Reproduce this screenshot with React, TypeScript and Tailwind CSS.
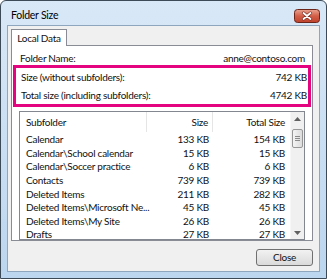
import React from 'react';

const rows = [
  { name: 'Calendar', size: '133 KB', total: '154 KB' },
  { name: 'Calendar\\School calendar', size: '15 KB', total: '15 KB' },
  { name: 'Calendar\\Soccer practice', size: '6 KB', total: '6 KB' },
  { name: 'Contacts', size: '739 KB', total: '739 KB' },
  { name: 'Deleted Items', size: '211 KB', total: '282 KB' },
  { name: 'Deleted Items\\Microsoft Ne...', size: '45 KB', total: '45 KB' },
  { name: 'Deleted Items\\My Site', size: '26 KB', total: '26 KB' },
  { name: 'Drafts', size: '27 KB', total: '27 KB' },
];

const CloseGlyph: React.FC = () => (
  <svg width="26" height="14" viewBox="0 0 26 14">
    <defs>
      <linearGradient id="cg" x1="0" y1="0" x2="0" y2="1">
        <stop offset="0" stopColor="#e9a493" />
        <stop offset="0.5" stopColor="#d25f48" />
        <stop offset="1" stopColor="#c0412b" />
      </linearGradient>
    </defs>
    <rect x="0.5" y="0.5" width="25" height="13" rx="3" fill="url(#cg)" stroke="#6b2519" />
    <path d="M9.5 4 L16.5 10 M16.5 4 L9.5 10" stroke="#7a2d22" strokeWidth="3" strokeLinecap="round" />
    <path d="M9.5 4 L16.5 10 M16.5 4 L9.5 10" stroke="#ffffff" strokeWidth="1.8" strokeLinecap="round" />
  </svg>
);

const App: React.FC = () => {
  return (
    <div
      className="w-[327px] h-[279px] border border-[#3c4a58] rounded-t-[6px] bg-gradient-to-b from-[#d9e8f7] to-[#bcd6ef] flex flex-col px-[6px] pb-[6px] text-[10px] tracking-[-0.25px] text-[#111]"
      style={{ fontFamily: 'Lato, "Noto Sans", sans-serif' }}
    >
      {/* title bar */}
      <div className="h-[24px] flex items-center justify-between shrink-0">
        <span className="pl-[4px] pt-[6px] text-[10.5px] text-black">Folder Size</span>
        <div className="mt-[6px] flex">
          <CloseGlyph />
        </div>
      </div>

      {/* client area */}
      <div className="flex-1 bg-[#f0f0f0] border border-[#8fa6bf] flex flex-col pl-[3px] pr-[6px] pt-[3px]">
        {/* tab */}
        <div className="flex">
          <div className="h-[17px] w-[56px] border border-b-0 border-[#898c95] bg-white flex items-center justify-center -mb-px relative z-10">
            Local Data
          </div>
        </div>
        <div className="h-[196px] border border-[#898c95] bg-white flex flex-col px-[1px] pt-[5px]">
          <div className="flex justify-between pl-[7px] pr-[6px] h-[14px] items-center">
            <span>Folder Name:</span>
            <span>anne@contoso.com</span>
          </div>
          <div className="border-[3px] border-[#e5047f] flex flex-col pl-[5px] pr-[1px] h-[46px] justify-center gap-[3px]">
            <div className="flex justify-between h-[15px] items-center">
              <span>Size (without subfolders):</span>
              <span>742 KB</span>
            </div>
            <div className="flex justify-between h-[15px] items-center">
              <span>Total size (including subfolders):</span>
              <span>4742 KB</span>
            </div>
          </div>

          {/* list view */}
          <div className="mt-[4px] mx-[6px] h-[129px] border border-[#828790] flex">
            <div className="flex-1 flex flex-col">
              <div className="h-[20px] flex items-center shrink-0">
                <div className="w-[127px] pl-[6px] h-full flex items-center border-r border-[#e5e5e5]">Subfolder</div>
                <div className="w-[66px] pr-[4px] h-full flex items-center justify-end border-r border-[#e5e5e5]">Size</div>
                <div className="w-[76px] pr-[4px] h-full flex items-center justify-end">Total Size</div>
              </div>
              <div className="flex flex-col pt-[1px]">
                {rows.map((r, i) => (
                  <div key={i} className="h-[13.6px] flex items-center">
                    <div className="w-[127px] pl-[6px] whitespace-nowrap">{r.name}</div>
                    <div className="w-[66px] pr-[4px] text-right">{r.size}</div>
                    <div className="w-[76px] pr-[4px] text-right">{r.total}</div>
                  </div>
                ))}
              </div>
            </div>
            {/* scrollbar */}
            <div className="w-[14px] bg-[#f0f0f0] flex flex-col items-center border-l border-[#f7f7f7]">
              <div className="h-[13px] flex items-center justify-center">
                <svg width="7" height="4" viewBox="0 0 7 4"><path d="M0 4 L3.5 0 L7 4 Z" fill="#606060" /></svg>
              </div>
              <div className="mt-[4px] w-[11px] h-[19px] rounded-[2px] border border-[#979797] bg-gradient-to-r from-[#f4f4f4] to-[#dcdcdc] flex flex-col items-center justify-center gap-[1px]">
                <div className="w-[5px] h-px bg-[#8a8a8a]" />
                <div className="w-[5px] h-px bg-[#8a8a8a]" />
                <div className="w-[5px] h-px bg-[#8a8a8a]" />
              </div>
              <div className="flex-1" />
              <div className="h-[13px] flex items-center justify-center">
                <svg width="7" height="4" viewBox="0 0 7 4"><path d="M0 0 L3.5 4 L7 0 Z" fill="#606060" /></svg>
              </div>
            </div>
          </div>
        </div>

        {/* buttons */}
        <div className="flex justify-end pt-[8px]">
          <button className="w-[57px] h-[17px] rounded-[3px] border border-[#707070] bg-gradient-to-b from-[#f2f2f2] to-[#dadada] text-[10px] flex items-center justify-center">
            Close
          </button>
        </div>
      </div>
    </div>
  );
};

export default App;
